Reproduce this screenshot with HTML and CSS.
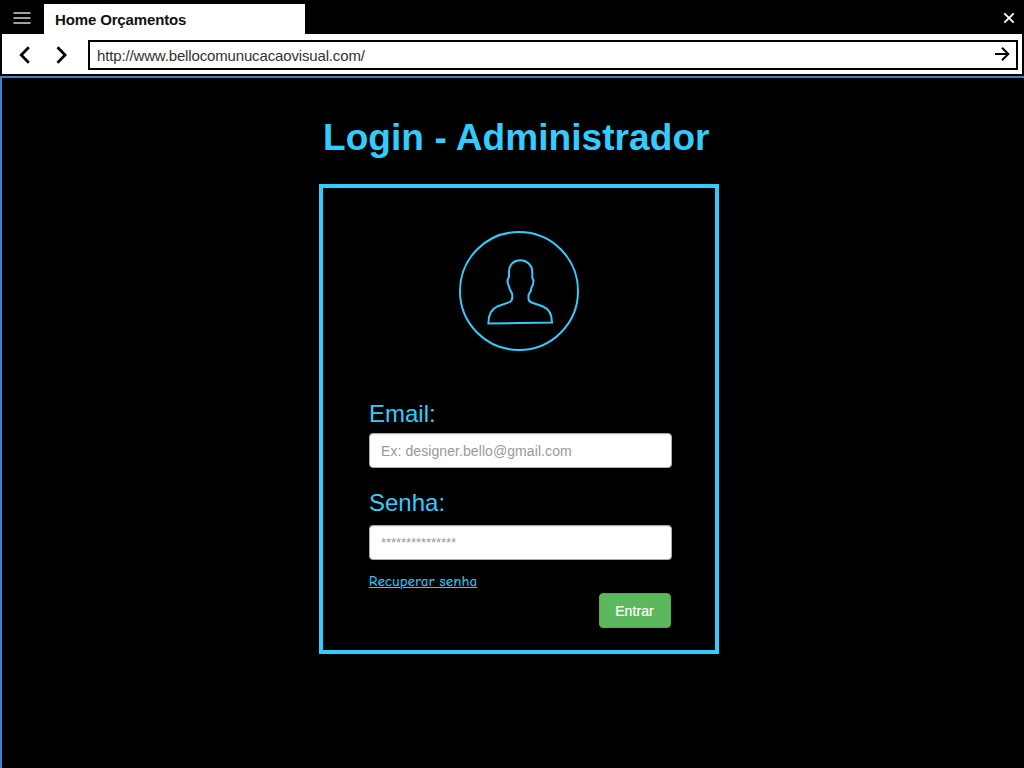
FILE: index.html
```html
<!DOCTYPE html>
<html lang="pt-BR">
<head>
<meta charset="utf-8">
<title>Home Orçamentos</title>
<link rel="stylesheet" href="styles.css">
</head>
<body>
<header class="browser">
  <div class="tabs">
    <svg class="menu" width="18" height="12" viewBox="0 0 18 12"><path d="M.5 1h17M.5 6h17M.5 11h17"/></svg>
    <div class="tab">Home Orçamentos</div>
    <svg class="close" width="12" height="12" viewBox="0 0 12 12"><path d="M1.3 1.3l9.4 9.4M10.7 1.3l-9.4 9.4"/></svg>
  </div>
  <div class="toolbar">
    <svg class="arrow" width="12" height="18" viewBox="0 0 12 18"><path d="M10.8 1.2L3.2 9l7.6 7.8"/></svg>
    <svg class="arrow" width="12" height="18" viewBox="0 0 12 18"><path d="M1.5 1.2L9.1 9l-7.6 7.8"/></svg>
    <div class="address">
      <span class="url">http://www.bellocomunucacaovisual.com/</span>
      <svg class="go" width="15" height="14" viewBox="0 0 15 14"><path d="M0 7h13.5M7 .8L13.3 7 7 13.2"/></svg>
    </div>
  </div>
</header>
<main class="page">
  <h1 class="title">Login - Administrador</h1>
  <form class="login">
    <svg class="avatar" width="120" height="120" viewBox="0 0 120 120">
      <circle cx="60" cy="60" r="59"/>
      <path d="M29.4 92.5C29.4 83 32.8 77.7 38.8 75.2L50.5 71.2C53.5 69.5 54 67 53 62.5L50.5 57.5C50.3 55 48.8 54 48.5 50.5L49 47.5 50 46V41C50 33.5 55 29.3 61.3 29.3S73.3 34 73.3 41V47L74.5 49.5 74 53.5 72.3 57 72 59.5 69.5 64V68C70 71 71.5 71.4 74 72L83.5 75.2C90.5 78 93 84 93 91.5L60 92Z"/>
    </svg>
    <label class="label" for="email">Email:</label>
    <input class="field" id="email" type="text" placeholder="Ex: designer.bello@gmail.com">
    <label class="label label-password" for="password">Senha:</label>
    <input class="field field-password" id="password" type="password" placeholder="***************">
    <a class="recover" href="#">Recuperar senha</a>
    <button class="submit" type="button">Entrar</button>
  </form>
</main>
</body>
</html>
```
FILE: styles.css
```css
* { box-sizing: border-box; }
body {
  margin: 0;
  height: 768px;
  overflow: hidden;
  display: flex;
  flex-direction: column;
  background: #000;
  font-family: "Liberation Sans", Arial, sans-serif;
}
svg { display: block; fill: none; flex: none; }
.browser { height: 76px; padding: 4px 2px 0; }
.tabs { display: flex; height: 30px; padding-right: 7px; }
.menu { margin: 8px 13px 0 11px; stroke: #a0a0a0; stroke-width: 2; }
.tab {
  width: 261px;
  padding-left: 11px;
  background: #fff;
  color: #111;
  font-size: 15px;
  font-weight: bold;
  line-height: 31px;
  letter-spacing: -0.14px;
}
.close { margin: 8px 0 0 auto; stroke: #fff; stroke-width: 1.9; }
.toolbar {
  display: flex;
  align-items: center;
  height: 40px;
  padding: 0 4px 0 16px;
  background: #fff;
}
.arrow { margin: 1px 26px 0 0; stroke: #000; stroke-width: 2.7; }
.address {
  flex: 1;
  display: flex;
  align-items: center;
  justify-content: space-between;
  height: 30px;
  margin: 2px 0 0 -6px;
  padding: 0 6px 0 7px;
  border: 2px solid #000;
}
.url { padding-top: 2px; color: #333; font-size: 15px; line-height: 26px; letter-spacing: -0.15px; }
.go { stroke: #000; stroke-width: 2; margin-top: -2px; }
.page {
  flex: 1;
  padding: 38px 0 0 317px;
  border-top: 2px solid #3d80cc;
  border-left: 2px solid #3d80cc;
}
.title {
  margin: 0 0 0 4px;
  color: #33ccff;
  font-size: 37px;
  line-height: 44px;
  letter-spacing: .07px;
}
.login {
  display: flex;
  flex-direction: column;
  align-items: flex-start;
  width: 400px;
  height: 470px;
  margin-top: 24px;
  padding: 43px 43px 0 46px;
  border: 4px solid #33ccff;
}
.avatar { margin: 0 0 49px 90px; stroke: #33ccff; stroke-width: 2; }
.label { height: 28px; color: #33ccff; font-size: 24px; line-height: 28px; }
.label-password { margin-top: 21px; }
.field {
  width: 303px;
  height: 35px;
  margin: 5px 0 0 -.5px;
  padding: 0 11.5px;
  border: 1px solid #aaa;
  border-radius: 4px;
  background: #fff;
  box-shadow: inset 0 1px 1px rgba(0, 0, 0, .08);
  font-family: inherit;
  font-size: 14px;
  letter-spacing: .08px;
}
.field-password { margin-top: 8px; font-size: 13px; letter-spacing: -.06px; }
.field::placeholder { color: #999; opacity: 1; }
.recover {
  margin-top: 12px;
  color: #33ccff;
  font-family: "Comic Sans MS", "Comic Neue", Lato, sans-serif;
  font-size: 14px;
  line-height: 20px;
  letter-spacing: .45px;
  -webkit-text-stroke: .25px #33ccff;
}
.submit {
  align-self: flex-end;
  width: 72px;
  height: 35px;
  margin: 1px 1px 0 0;
  padding: 0 1px 0 0;
  border: 1px solid #4cae4c;
  border-radius: 4px;
  background: #5cb85c;
  color: #fff;
  font-family: inherit;
  font-size: 14px;
  letter-spacing: .1px;
  -webkit-text-stroke: .2px #fff;
}
```
